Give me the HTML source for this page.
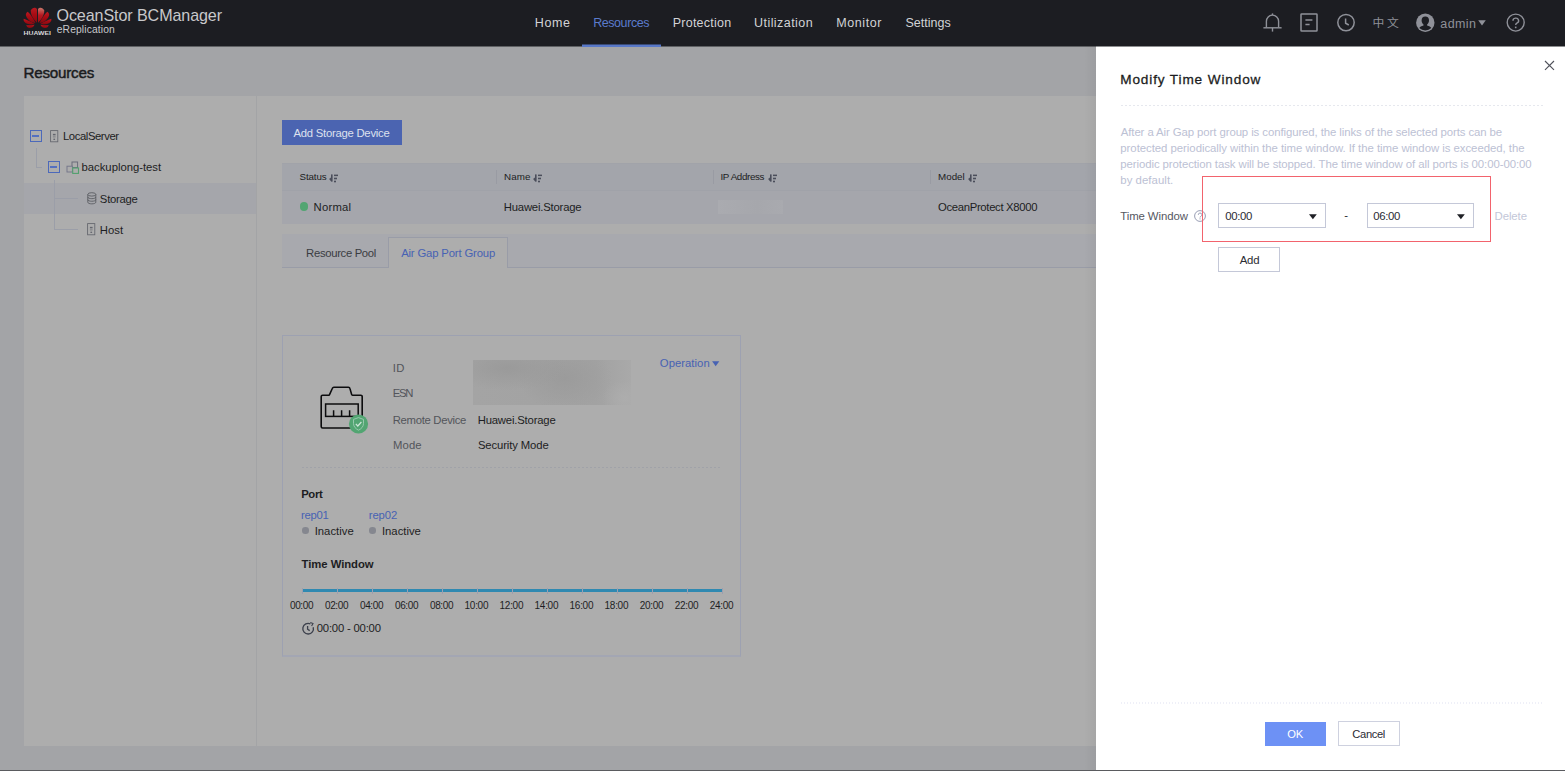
<!DOCTYPE html>
<html lang="en">
<head>
<meta charset="utf-8">
<title>OceanStor BCManager eReplication</title>
<style>
*{box-sizing:border-box;margin:0;padding:0}
html,body{width:1565px;height:771px;overflow:hidden}
body{position:relative;background:#a3a4a7;font-family:"Liberation Sans","Noto Sans CJK SC",sans-serif;font-size:11px;color:#1d1e23}
.a{position:absolute}
.t{position:absolute;white-space:pre}
svg{position:absolute;overflow:visible}
</style>
</head>
<body>
<div class="a" style="left:0px;top:0px;width:1565px;height:46px;background:#1c1d22"></div>
<svg style="left:18px;top:2px" width="40" height="40" viewBox="0 0 40 40">
<defs><linearGradient id="lg" x1="0" y1="0" x2="0" y2="1"><stop offset="0" stop-color="#b81a22"/><stop offset="0.45" stop-color="#a80b13"/><stop offset="1" stop-color="#870910"/></linearGradient>
<linearGradient id="lg2" x1="0" y1="0" x2="0" y2="1"><stop offset="0" stop-color="#c9786c"/><stop offset="0.5" stop-color="#b51820"/><stop offset="1" stop-color="#a00c13"/></linearGradient></defs>
<g fill="url(#lg)">
<path d="M 19 20.7 C 15.8 17.8 12.4 12.8 12.8 8.4 C 13.6 6.8 15 5.8 16.4 5.8 C 17.6 5.8 18.6 6.4 19 7.2 Z"/>
<path d="M 20 20.7 C 23.2 17.8 26.6 12.8 26.2 8.4 C 25.4 6.8 24 5.8 22.6 5.8 C 21.4 5.8 20.4 6.4 20 7.2 Z" fill="url(#lg2)"/>
<path d="M 17.5 21.1 C 13 20.6 8.8 17.4 7.8 13 C 7.9 11.4 8.6 10.3 9.8 9.7 C 12.6 12.4 15.8 17 17.5 21.1 Z"/>
<path d="M 21.5 21.1 C 26 20.6 30.2 17.4 31.2 13 C 31.1 11.4 30.4 10.3 29.2 9.7 C 26.4 12.4 23.2 17 21.5 21.1 Z"/>
<path d="M 16.8 21.9 C 13.6 22.9 8 22.6 6 19.2 C 5.5 18.2 5.5 17.4 5.8 16.8 C 9 18.2 13 19.6 16.8 21.9 Z"/>
<path d="M 22.2 21.9 C 25.4 22.9 31 22.6 33 19.2 C 33.5 18.2 33.5 17.4 33.2 16.8 C 30 18.2 26 19.6 22.2 21.9 Z"/>
<path d="M 16.5 22.7 C 15.6 25 13.6 26.2 11.6 26 C 10 25.8 8.8 24.8 8.2 23.2 C 11 23.4 13.8 23.2 16.5 22.7 Z"/>
<path d="M 22.5 22.7 C 23.4 25 25.4 26.2 27.4 26 C 29 25.8 30.2 24.8 30.8 23.2 C 28 23.4 25.2 23.2 22.5 22.7 Z"/>
</g>
<text x="19.2" y="33.4" text-anchor="middle" font-family="Liberation Sans, sans-serif" font-weight="700" font-size="6.1" fill="#d6d6d8" textLength="27.4" lengthAdjust="spacingAndGlyphs">HUAWEI</text>
</svg>
<div class="t" style="left:56.47px;top:4.09px;font-size:16.1px;line-height:22px;height:22px;color:#c8c8cb;letter-spacing:-0.092px;">OceanStor BCManager</div>
<div class="t" style="left:56.74px;top:21.79px;font-size:10.3px;line-height:16px;height:16px;color:#c8c8cb;letter-spacing:0.126px;">eReplication</div>
<div class="t" style="left:534.83px;top:14.72px;font-size:12.5px;line-height:16px;height:16px;color:#d2d3d6;letter-spacing:0.566px;">Home</div>
<div class="t" style="left:593.14px;top:14.72px;font-size:12.5px;line-height:16px;height:16px;color:#5b7bcd;letter-spacing:-0.421px;">Resources</div>
<div class="t" style="left:672.72px;top:14.72px;font-size:12.5px;line-height:16px;height:16px;color:#d2d3d6;letter-spacing:0.235px;">Protection</div>
<div class="t" style="left:754.05px;top:14.72px;font-size:12.5px;line-height:16px;height:16px;color:#d2d3d6;letter-spacing:0.438px;">Utilization</div>
<div class="t" style="left:836.14px;top:14.72px;font-size:12.5px;line-height:16px;height:16px;color:#d2d3d6;letter-spacing:0.603px;">Monitor</div>
<div class="t" style="left:905.48px;top:14.72px;font-size:12.5px;line-height:16px;height:16px;color:#d2d3d6;letter-spacing:0.014px;">Settings</div>
<svg style="left:1262px;top:11px" width="22" height="24" viewBox="0 0 22 24" fill="none" stroke="#8f9199" stroke-width="1.4">
<path d="M4.4 16.6 V10.2 a6.1 6.1 0 0 1 12.2 0 V16.6"/><path d="M1.4 16.8 H19.6"/><path d="M10.5 4 V2.4"/><path d="M10.5 17 V20.6"/></svg>
<svg style="left:1299px;top:12px" width="20" height="20" viewBox="0 0 20 20" fill="none" stroke="#8f9199" stroke-width="1.5">
<rect x="2" y="2" width="16" height="17" rx="0.6"/><path d="M6.4 8 H13.4 M6.4 12.6 H10.6"/></svg>
<svg style="left:1336px;top:12px" width="20" height="20" viewBox="0 0 20 20" fill="none" stroke="#8f9199" stroke-width="1.5">
<circle cx="10" cy="10.6" r="8.2"/><path d="M9.6 6.4 V11.2 L12.8 13"/></svg>
<div class="t" style="left:1372.57px;top:14.61px;font-size:11.8px;line-height:16px;height:16px;color:#8f9199;letter-spacing:2.632px;">中文</div>
<svg style="left:1415px;top:11.5px" width="20" height="20" viewBox="0 0 20 20">
<circle cx="10.3" cy="10.7" r="9.2" fill="#8f9199"/>
<path d="M10.3 4.6 a3.7 4 0 0 1 3.7 4 c0 1.7 -0.8 3.1 -1.9 3.8 v1 c2.1 .5 3.6 1.5 4.2 2.7 a8.6 8.6 0 0 1 -12 0 c.6 -1.2 2.1 -2.2 4.2 -2.7 v-1 c-1.1 -.7 -1.9 -2.1 -1.9 -3.8 a3.7 4 0 0 1 3.7 -4z" fill="#1c1d22"/></svg>
<div class="t" style="left:1440.26px;top:15.52px;font-size:12.5px;line-height:16px;height:16px;color:#8f9199;letter-spacing:0.436px;">admin</div>
<svg style="left:1478px;top:19.6px" width="8" height="6" viewBox="0 0 8 6"><path d="M0.2 0.2 H7.8 L4 5.4z" fill="#8f9199"/></svg>
<svg style="left:1505px;top:12px" width="20" height="20" viewBox="0 0 20 20" fill="none" stroke="#8f9199" stroke-width="1.4">
<circle cx="10.7" cy="10.6" r="8.5"/><path d="M8 8.8 a2.8 2.6 0 1 1 3.9 2.3 c-.9 .5 -1.2 1 -1.2 2"/><path d="M10.7 14.6 V16.2" stroke-width="1.6"/></svg>
<div class="t" style="left:23.55px;top:62.47px;font-size:15.2px;line-height:22px;height:22px;color:#1a1b20;letter-spacing:-0.239px;-webkit-text-stroke:0.45px #1a1b20;">Resources</div>
<div class="a" style="left:24px;top:96px;width:1541px;height:650px;background:#adadad"></div>
<div class="a" style="left:24px;top:183px;width:232px;height:31px;background:#a5a6ab"></div>
<div class="a" style="left:256px;top:96px;width:1px;height:650px;background:#a3a4a6"></div>
<div class="a" style="left:36px;top:148px;width:1px;height:19px;background:#9b9ea8"></div>
<div class="a" style="left:36px;top:167px;width:6px;height:1px;background:#9b9ea8"></div>
<div class="a" style="left:54px;top:180px;width:1px;height:50px;background:#9b9ea8"></div>
<div class="a" style="left:54px;top:198px;width:24px;height:1px;background:#9b9ea8"></div>
<div class="a" style="left:54px;top:229px;width:24px;height:1px;background:#9b9ea8"></div>
<div class="a" style="left:30px;top:130px;width:12px;height:12px;border:1px solid #4c69ba"></div>
<div class="a" style="left:32.4px;top:135.4px;width:7px;height:1.2px;background:#5470c0"></div>
<div class="a" style="left:48px;top:161px;width:12px;height:12px;border:1px solid #4c69ba"></div>
<div class="a" style="left:50.4px;top:166.4px;width:7px;height:1.2px;background:#5470c0"></div>
<svg style="left:49.9px;top:130px" width="9" height="13" viewBox="0 0 9 13" fill="none" stroke="#63656d" stroke-width="0.85">
<rect x="0.6" y="0.6" width="7.2" height="11.2"/><path d="M2.9 4.6 H5.6" stroke-width="1.5"/><path d="M2.9 6.9 H5.6" stroke-width="0.7"/><path d="M3.4 9.3 H5.1" stroke-width="1.3"/></svg>
<div class="t" style="left:62.94px;top:127.80px;font-size:11.3px;line-height:16px;height:16px;color:#1d1e23;letter-spacing:-0.413px;">LocalServer</div>
<svg style="left:66px;top:160.5px" width="14" height="13" viewBox="0 0 14 13" fill="none" stroke-width="0.95">
<rect x="6" y="1" width="5.6" height="5.6" stroke="#686a78"/><rect x="1" y="5.2" width="5.4" height="5.8" stroke="#74768a" fill="#adadad"/><rect x="6.7" y="7" width="5.8" height="5.4" stroke="#52a06e" stroke-width="1.1" fill="#adadad"/></svg>
<div class="t" style="left:81.59px;top:158.80px;font-size:11.3px;line-height:16px;height:16px;color:#1d1e23;letter-spacing:-0.019px;">backuplong-test</div>
<svg style="left:87px;top:192px" width="10" height="13" viewBox="0 0 10 13" fill="none" stroke="#5a5c62" stroke-width="0.9">
<ellipse cx="4.8" cy="2.4" rx="4" ry="1.7"/><path d="M0.8 2.4 V10.2 c0 2.2 8 2.2 8 0 V2.4"/><path d="M0.8 5 c0 2.2 8 2.2 8 0 M0.8 7.6 c0 2.2 8 2.2 8 0"/></svg>
<div class="t" style="left:99.86px;top:191.40px;font-size:11.3px;line-height:16px;height:16px;color:#1d1e23;letter-spacing:-0.257px;">Storage</div>
<svg style="left:86.9px;top:223.3px" width="9" height="13" viewBox="0 0 9 13" fill="none" stroke="#63656d" stroke-width="0.85">
<rect x="0.6" y="0.6" width="7.2" height="11.2"/><path d="M2.9 4.6 H5.6" stroke-width="1.5"/><path d="M2.9 6.9 H5.6" stroke-width="0.7"/><path d="M3.4 9.3 H5.1" stroke-width="1.3"/></svg>
<div class="t" style="left:99.71px;top:222.40px;font-size:11.3px;line-height:16px;height:16px;color:#1d1e23;letter-spacing:0.045px;">Host</div>
<div class="a" style="left:282px;top:120px;width:120px;height:25px;background:#4b64b1"></div>
<div class="t" style="left:293.55px;top:125.20px;font-size:11.3px;line-height:16px;height:16px;color:#dde1ee;letter-spacing:-0.254px;">Add Storage Device</div>
<div class="a" style="left:282px;top:163px;width:1283px;height:28px;background:#a3a5ab"></div>
<div class="a" style="left:282px;top:191px;width:1283px;height:32.5px;background:#a5a6ac"></div>
<div class="a" style="left:282px;top:190px;width:1283px;height:1px;background:#a0a2a9"></div>
<div class="a" style="left:282px;top:163px;width:1283px;height:1px;background:#a1a3a9"></div>
<div class="t" style="left:299.51px;top:169.38px;font-size:9.8px;line-height:16px;height:16px;color:#1d1e23;letter-spacing:-0.117px;">Status</div>
<svg style="left:329.2px;top:173.6px" width="10" height="9" viewBox="0 0 10 9" fill="#4b4e5b">
<rect x="2" y="0.4" width="1.6" height="7.2"/><path d="M2.2 3.2 L0.1 4.9 L2.2 7.6 Z"/><rect x="5" y="0.6" width="4" height="1.5"/><rect x="5" y="3.7" width="3" height="1.6"/><rect x="5" y="6.7" width="2" height="1.6"/></svg>
<div class="a" style="left:496px;top:170px;width:1px;height:14px;background:#999ba3"></div>
<div class="t" style="left:504.12px;top:169.38px;font-size:9.8px;line-height:16px;height:16px;color:#1d1e23;letter-spacing:0.095px;">Name</div>
<svg style="left:533.3px;top:173.6px" width="10" height="9" viewBox="0 0 10 9" fill="#4b4e5b">
<rect x="2" y="0.4" width="1.6" height="7.2"/><path d="M2.2 3.2 L0.1 4.9 L2.2 7.6 Z"/><rect x="5" y="0.6" width="4" height="1.5"/><rect x="5" y="3.7" width="3" height="1.6"/><rect x="5" y="6.7" width="2" height="1.6"/></svg>
<div class="a" style="left:713px;top:170px;width:1px;height:14px;background:#999ba3"></div>
<div class="t" style="left:720.46px;top:169.38px;font-size:9.8px;line-height:16px;height:16px;color:#1d1e23;letter-spacing:-0.348px;">IP Address</div>
<svg style="left:767.9px;top:173.6px" width="10" height="9" viewBox="0 0 10 9" fill="#4b4e5b">
<rect x="2" y="0.4" width="1.6" height="7.2"/><path d="M2.2 3.2 L0.1 4.9 L2.2 7.6 Z"/><rect x="5" y="0.6" width="4" height="1.5"/><rect x="5" y="3.7" width="3" height="1.6"/><rect x="5" y="6.7" width="2" height="1.6"/></svg>
<div class="a" style="left:930px;top:170px;width:1px;height:14px;background:#999ba3"></div>
<div class="t" style="left:938.12px;top:169.38px;font-size:9.8px;line-height:16px;height:16px;color:#1d1e23;letter-spacing:-0.025px;">Model</div>
<svg style="left:968.0px;top:173.6px" width="10" height="9" viewBox="0 0 10 9" fill="#4b4e5b">
<rect x="2" y="0.4" width="1.6" height="7.2"/><path d="M2.2 3.2 L0.1 4.9 L2.2 7.6 Z"/><rect x="5" y="0.6" width="4" height="1.5"/><rect x="5" y="3.7" width="3" height="1.6"/><rect x="5" y="6.7" width="2" height="1.6"/></svg>
<div class="a" style="left:300px;top:202.4px;width:8.2px;height:8.2px;background:#52a572;border-radius:50%"></div>
<div class="t" style="left:313.52px;top:199.40px;font-size:11.3px;line-height:16px;height:16px;color:#1d1e23;letter-spacing:0.240px;">Normal</div>
<div class="t" style="left:503.78px;top:199.40px;font-size:11.3px;line-height:16px;height:16px;color:#1d1e23;letter-spacing:-0.196px;">Huawei.Storage</div>
<div class="a" style="left:718px;top:200px;width:65px;height:14px;background:linear-gradient(90deg,#aaabb0,#a6a7ac 60%,#a9aaaf)"></div>
<div class="t" style="left:937.94px;top:199.40px;font-size:11.3px;line-height:16px;height:16px;color:#1d1e23;letter-spacing:-0.312px;">OceanProtect X8000</div>
<div class="a" style="left:282px;top:234px;width:1283px;height:34px;background:#a8a9ae;border-bottom:1px solid #999ca7"></div>
<div class="a" style="left:388px;top:237px;width:120px;height:31px;background:#adadad;border:1px solid #999ca7;border-bottom:none"></div>
<div class="t" style="left:306.11px;top:244.60px;font-size:11.3px;line-height:16px;height:16px;color:#3a3c42;letter-spacing:-0.327px;">Resource Pool</div>
<div class="t" style="left:401.13px;top:244.60px;font-size:11.3px;line-height:16px;height:16px;color:#4762b3;letter-spacing:-0.151px;">Air Gap Port Group</div>
<div class="a" style="left:282px;top:335px;width:459px;height:322px;border:1px solid #9da1b1;border-bottom:2px solid #a3a6b3"></div>
<svg style="left:318px;top:384px" width="50" height="50" viewBox="0 0 50 50" fill="none">
<path d="M4.6 44 a1.4 1.4 0 0 1 -1.4 -1.4 V12.6 a1.4 1.4 0 0 1 1.4 -1.4 H10.6 a1 1 0 0 0 1 -0.7 L14.4 4.2 a1.6 1.6 0 0 1 1.5 -1 H30.4 a1.6 1.6 0 0 1 1.5 1.2 L33.6 10.4 a1 1 0 0 0 1 0.8 H42.8 a1.4 1.4 0 0 1 1.4 1.4 V42.6 a1.4 1.4 0 0 1 -1.4 1.4 Z" stroke="#0c0c0e" stroke-width="1.6"/>
<rect x="7.6" y="20" width="32.6" height="12.4" stroke="#0c0c0e" stroke-width="1.5"/>
<path d="M15.6 26.2 V32 M23.6 26.2 V32 M31.6 26.2 V32" stroke="#0c0c0e" stroke-width="1.5"/>
<circle cx="40.5" cy="40" r="9.6" fill="#52a572"/>
<path d="M40.5 33.6 l5 1.8 v4.2 c0 3 -2.2 5.2 -5 6.6 c-2.8 -1.4 -5 -3.6 -5 -6.6 v-4.2 z" stroke="#9fcdb3" stroke-width="0.9"/>
<path d="M37.8 39.8 l2 2.2 l3.6 -4" stroke="#cfe6d9" stroke-width="1.2"/>
</svg>
<div class="t" style="left:392.77px;top:360.40px;font-size:11.3px;line-height:16px;height:16px;color:#53555b;letter-spacing:0.245px;">ID</div>
<div class="t" style="left:392.78px;top:385.00px;font-size:11.3px;line-height:16px;height:16px;color:#53555b;letter-spacing:-1.262px;">ESN</div>
<div class="t" style="left:392.78px;top:412.40px;font-size:11.3px;line-height:16px;height:16px;color:#53555b;letter-spacing:-0.303px;">Remote Device</div>
<div class="t" style="left:392.95px;top:436.80px;font-size:11.3px;line-height:16px;height:16px;color:#53555b;letter-spacing:0.133px;">Mode</div>
<div class="a" style="left:473px;top:360px;width:158px;height:45px;background:radial-gradient(ellipse 38% 50% at 22% 18%,#9a9a9a,rgba(154,154,154,0)),radial-gradient(ellipse 30% 70% at 58% 40%,#9b9b9b,rgba(155,155,155,0)),radial-gradient(ellipse 14% 40% at 96% 85%,#adadad,rgba(173,173,173,0)),linear-gradient(90deg,#a4a4a4 0%,#a2a2a2 78%,#a9a9a9 100%);"></div>
<div class="t" style="left:477.71px;top:412.40px;font-size:11.3px;line-height:16px;height:16px;color:#1d1e23;letter-spacing:-0.184px;">Huawei.Storage</div>
<div class="t" style="left:477.88px;top:436.80px;font-size:11.3px;line-height:16px;height:16px;color:#1d1e23;letter-spacing:-0.115px;">Security Mode</div>
<div class="t" style="left:659.85px;top:354.60px;font-size:11.3px;line-height:16px;height:16px;color:#4762b3;letter-spacing:0.026px;">Operation</div>
<svg style="left:712px;top:361px" width="8" height="6" viewBox="0 0 8 6"><path d="M0.1 0.3 H7.3 L3.7 5.2z" fill="#4762b3"/></svg>
<div class="a" style="left:302px;top:467px;width:420px;height:1px;background:repeating-linear-gradient(90deg,#a0a2a8 0 2px,transparent 2px 4px)"></div>
<div class="t" style="left:301.18px;top:485.60px;font-size:11.3px;line-height:16px;height:16px;color:#1d1e23;letter-spacing:-0.339px;font-weight:700;">Port</div>
<div class="t" style="left:301.02px;top:507.00px;font-size:11.3px;line-height:16px;height:16px;color:#4762b3;letter-spacing:-0.310px;">rep01</div>
<div class="t" style="left:368.83px;top:507.00px;font-size:11.3px;line-height:16px;height:16px;color:#4762b3;letter-spacing:-0.137px;">rep02</div>
<div class="a" style="left:302px;top:527.4px;width:6.6px;height:6.6px;background:#85878f;border-radius:50%"></div>
<div class="a" style="left:369.4px;top:527.4px;width:6.6px;height:6.6px;background:#85878f;border-radius:50%"></div>
<div class="t" style="left:314.65px;top:523.40px;font-size:11.3px;line-height:16px;height:16px;color:#1d1e23;letter-spacing:0.017px;">Inactive</div>
<div class="t" style="left:381.97px;top:523.40px;font-size:11.3px;line-height:16px;height:16px;color:#1d1e23;letter-spacing:-0.014px;">Inactive</div>
<div class="t" style="left:301.62px;top:556.40px;font-size:11.3px;line-height:16px;height:16px;color:#1d1e23;letter-spacing:-0.050px;font-weight:700;">Time Window</div>
<div class="a" style="left:302.6px;top:588.6px;width:419.6px;height:3.5px;background:#2f89b1"></div>
<div class="a" style="left:301.9px;top:587.5px;width:1px;height:6.5px;background:#9b9fb0"></div>
<div class="t" style="left:290.01px;top:598.38px;font-size:10px;line-height:16px;height:16px;color:#1d1e23;letter-spacing:-0.393px;">00:00</div>
<div class="a" style="left:336.9px;top:587.5px;width:1px;height:6.5px;background:#9b9fb0"></div>
<div class="t" style="left:325.01px;top:598.38px;font-size:10px;line-height:16px;height:16px;color:#1d1e23;letter-spacing:-0.393px;">02:00</div>
<div class="a" style="left:371.9px;top:587.5px;width:1px;height:6.5px;background:#9b9fb0"></div>
<div class="t" style="left:360.01px;top:598.38px;font-size:10px;line-height:16px;height:16px;color:#1d1e23;letter-spacing:-0.393px;">04:00</div>
<div class="a" style="left:406.9px;top:587.5px;width:1px;height:6.5px;background:#9b9fb0"></div>
<div class="t" style="left:395.01px;top:598.38px;font-size:10px;line-height:16px;height:16px;color:#1d1e23;letter-spacing:-0.393px;">06:00</div>
<div class="a" style="left:441.9px;top:587.5px;width:1px;height:6.5px;background:#9b9fb0"></div>
<div class="t" style="left:430.01px;top:598.38px;font-size:10px;line-height:16px;height:16px;color:#1d1e23;letter-spacing:-0.393px;">08:00</div>
<div class="a" style="left:476.9px;top:587.5px;width:1px;height:6.5px;background:#9b9fb0"></div>
<div class="t" style="left:464.59px;top:598.38px;font-size:10px;line-height:16px;height:16px;color:#1d1e23;letter-spacing:-0.287px;">10:00</div>
<div class="a" style="left:511.9px;top:587.5px;width:1px;height:6.5px;background:#9b9fb0"></div>
<div class="t" style="left:499.59px;top:598.38px;font-size:10px;line-height:16px;height:16px;color:#1d1e23;letter-spacing:-0.287px;">12:00</div>
<div class="a" style="left:546.9px;top:587.5px;width:1px;height:6.5px;background:#9b9fb0"></div>
<div class="t" style="left:534.59px;top:598.38px;font-size:10px;line-height:16px;height:16px;color:#1d1e23;letter-spacing:-0.287px;">14:00</div>
<div class="a" style="left:581.9px;top:587.5px;width:1px;height:6.5px;background:#9b9fb0"></div>
<div class="t" style="left:569.59px;top:598.38px;font-size:10px;line-height:16px;height:16px;color:#1d1e23;letter-spacing:-0.287px;">16:00</div>
<div class="a" style="left:616.9px;top:587.5px;width:1px;height:6.5px;background:#9b9fb0"></div>
<div class="t" style="left:604.59px;top:598.38px;font-size:10px;line-height:16px;height:16px;color:#1d1e23;letter-spacing:-0.287px;">18:00</div>
<div class="a" style="left:651.9px;top:587.5px;width:1px;height:6.5px;background:#9b9fb0"></div>
<div class="t" style="left:639.85px;top:598.38px;font-size:10px;line-height:16px;height:16px;color:#1d1e23;letter-spacing:-0.353px;">20:00</div>
<div class="a" style="left:686.9px;top:587.5px;width:1px;height:6.5px;background:#9b9fb0"></div>
<div class="t" style="left:674.85px;top:598.38px;font-size:10px;line-height:16px;height:16px;color:#1d1e23;letter-spacing:-0.353px;">22:00</div>
<div class="a" style="left:721.9px;top:587.5px;width:1px;height:6.5px;background:#9b9fb0"></div>
<div class="t" style="left:709.85px;top:598.38px;font-size:10px;line-height:16px;height:16px;color:#1d1e23;letter-spacing:-0.353px;">24:00</div>
<svg style="left:301px;top:621.6px" width="14" height="14" viewBox="0 0 14 14" fill="none" stroke="#3c404c" stroke-width="1.35">
<path d="M9.4 1.9 A5.3 5.3 0 1 0 12.2 5.2"/><path d="M6.6 3.9 V7.2 L8.7 8.6" stroke-width="1.3"/><path d="M9.3 0.5 L12 1.6 L10.6 4.1" stroke-width="1.1"/></svg>
<div class="t" style="left:316.73px;top:620.20px;font-size:11.3px;line-height:16px;height:16px;color:#1d1e23;letter-spacing:-0.193px;">00:00 - 00:00</div>
<div class="a" style="left:1084px;top:46px;width:12px;height:725px;background:linear-gradient(90deg,rgba(0,0,0,0),rgba(0,0,0,.045))"></div>
<div class="a" style="left:1096px;top:46px;width:469px;height:725px;background:#fff"></div>
<svg style="left:1544px;top:60px" width="11" height="11" viewBox="0 0 11 11" fill="none" stroke="#50525b" stroke-width="1.15"><path d="M1 1 L10 9.8 M10 1 L1 9.8"/></svg>
<div class="t" style="left:1120.19px;top:68.74px;font-size:13.6px;line-height:22px;height:22px;color:#1b1c21;letter-spacing:0.871px;-webkit-text-stroke:0.28px #1b1c21;">Modify Time Window</div>
<div class="a" style="left:1121px;top:105px;width:423px;height:1px;background:repeating-linear-gradient(90deg,#e6e8ee 0 2px,transparent 2px 4px)"></div>
<div class="t" style="left:1120.74px;top:124.41px;font-size:11.4px;line-height:16px;height:16px;color:#bcc1d4;letter-spacing:-0.093px;">After a Air Gap port group is configured, the links of the selected ports can be</div>
<div class="t" style="left:1120.30px;top:140.01px;font-size:11.4px;line-height:16px;height:16px;color:#bcc1d4;letter-spacing:-0.043px;">protected periodically within the time window. If the time window is exceeded, the</div>
<div class="t" style="left:1120.30px;top:156.41px;font-size:11.4px;line-height:16px;height:16px;color:#bcc1d4;letter-spacing:-0.084px;">periodic protection task will be stopped. The time window of all ports is 00:00-00:00</div>
<div class="t" style="left:1120.30px;top:171.81px;font-size:11.4px;line-height:16px;height:16px;color:#bcc1d4;letter-spacing:0.042px;">by default.</div>
<div class="t" style="left:1120.31px;top:208.41px;font-size:11.4px;line-height:16px;height:16px;color:#55575f;letter-spacing:-0.097px;">Time Window</div>
<svg style="left:1194px;top:209.5px" width="12" height="12" viewBox="0 0 12 12" fill="none" stroke="#8d93ac" stroke-width="0.9">
<circle cx="6" cy="6" r="5.4"/><path d="M4.3 4.8 a1.8 1.7 0 1 1 2.5 1.5 c-.6 .3 -.8 .6 -.8 1.2"/><path d="M6 8.4 V9.4" stroke-width="1"/></svg>
<div class="a" style="left:1218px;top:203px;width:108px;height:25px;background:#fff;border:1px solid #c4c8d8"></div>
<div class="t" style="left:1225.33px;top:207.61px;font-size:11.4px;line-height:16px;height:16px;color:#2b2c33;letter-spacing:-0.394px;">00:00</div>
<svg style="left:1309px;top:214.2px" width="8" height="6" viewBox="0 0 8 6"><path d="M0 0.2 H7.8 L3.9 5.2z" fill="#1f2026"/></svg>
<div class="t" style="left:1344.29px;top:207.01px;font-size:11.4px;line-height:16px;height:16px;color:#2b2c33;letter-spacing:1.071px;">-</div>
<div class="a" style="left:1367px;top:203px;width:107px;height:25px;background:#fff;border:1px solid #c4c8d8"></div>
<div class="t" style="left:1373.31px;top:207.61px;font-size:11.4px;line-height:16px;height:16px;color:#2b2c33;letter-spacing:-0.387px;">06:00</div>
<svg style="left:1457.3px;top:214.2px" width="8" height="6" viewBox="0 0 8 6"><path d="M0 0.2 H7.8 L3.9 5.2z" fill="#1f2026"/></svg>
<div class="t" style="left:1494.53px;top:207.81px;font-size:11.4px;line-height:16px;height:16px;color:#c3c7d8;letter-spacing:-0.083px;">Delete</div>
<div class="a" style="left:1202px;top:176px;width:289px;height:66px;border:1px solid #f2636d"></div>
<div class="a" style="left:1218px;top:247px;width:62px;height:25px;background:#fff;border:1px solid #c4c8d8"></div>
<div class="t" style="left:1239.74px;top:251.61px;font-size:11.4px;line-height:16px;height:16px;color:#2b2c33;letter-spacing:-0.260px;">Add</div>
<div class="a" style="left:1121px;top:702px;width:423px;height:2px;background:repeating-linear-gradient(90deg,#eff0f8 0 1.5px,transparent 1.5px 3px)"></div>
<div class="a" style="left:1264.5px;top:722px;width:61.5px;height:24px;background:#6d91f5"></div>
<div class="t" style="left:1287.28px;top:725.60px;font-size:11.2px;line-height:16px;height:16px;color:#fff;letter-spacing:-0.314px;">OK</div>
<div class="a" style="left:1338px;top:721px;width:61.5px;height:25px;background:#fff;border:1px solid #ced1df"></div>
<div class="t" style="left:1352.35px;top:725.60px;font-size:11.2px;line-height:16px;height:16px;color:#2b2c33;letter-spacing:-0.380px;">Cancel</div>
<div class="a" style="left:0px;top:46px;width:1565px;height:1px;background:rgba(28,29,34,.5)"></div>
<div class="a" style="left:582px;top:45px;width:79px;height:2px;background:#5878c8"></div>
<div class="a" style="left:582px;top:44px;width:79px;height:1px;background:rgba(88,120,200,.5)"></div>
<div class="a" style="left:0px;top:770px;width:1565px;height:1px;background:#5a5b5f"></div>
</body>
</html>
